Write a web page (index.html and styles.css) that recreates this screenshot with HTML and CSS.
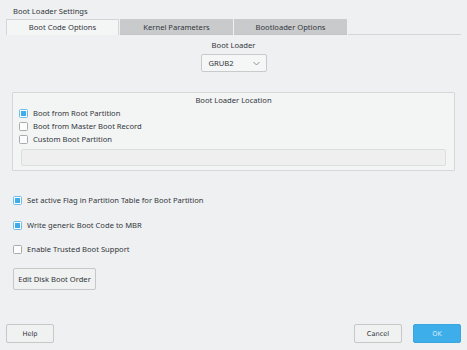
FILE: index.html
```html
<!DOCTYPE html>
<html>
<head>
<meta charset="utf-8">
<link rel="stylesheet" href="styles.css">
</head>
<body>
<div class="dialog">
  <div class="title">Boot Loader Settings</div>
  <div class="tabs">
    <div class="tab active">Boot Code Options</div>
    <div class="tab">Kernel Parameters</div>
    <div class="tab">Bootloader Options</div>
    <div class="tab-fill"></div>
  </div>
  <div class="panel">
    <div class="loader">
      <div class="loader-label">Boot Loader</div>
      <div class="combo"><span>GRUB2</span><svg class="chev" width="7" height="5" viewBox="0 0 7 5"><path d="M0.5 1 L3.5 4 L6.5 1" fill="none" stroke="#7a7c7e" stroke-width="0.8"/></svg></div>
    </div>
    <div class="group">
      <div class="group-title">Boot Loader Location</div>
      <label class="row"><span class="cb checked"></span>Boot from Root Partition</label>
      <label class="row"><span class="cb"></span>Boot from Master Boot Record</label>
      <label class="row"><span class="cb"></span>Custom Boot Partition</label>
      <div class="field"></div>
    </div>
    <div class="options">
      <label class="row"><span class="cb checked"></span>Set active Flag in Partition Table for Boot Partition</label>
      <label class="row"><span class="cb checked"></span>Write generic Boot Code to MBR</label>
      <label class="row"><span class="cb"></span>Enable Trusted Boot Support</label>
    </div>
    <div class="btn edit">Edit Disk Boot Order</div>
  </div>
  <div class="footer">
    <div class="btn fbtn">Help</div>
    <div class="spacer"></div>
    <div class="btn fbtn">Cancel</div>
    <div class="btn fbtn ok">OK</div>
  </div>
</div>
</body>
</html>
```
FILE: styles.css
```css
html, body {
  margin: 0;
  padding: 0;
  background: #eff0f1;
}
.dialog {
  width: 467px;
  height: 350px;
  font-family: "Noto Sans", "Open Sans", sans-serif;
  font-size: 7.6px;
  color: #31363b;
  display: flex;
  flex-direction: column;
  box-sizing: border-box;
}
.title {
  padding: 6px 0 0 13px;
  height: 13px;
  line-height: 11px;
}
.tabs {
  display: flex;
  margin: 0 6px;
  height: 16px;
}
.tab {
  width: 113px;
  height: 16px;
  line-height: 16px;
  text-align: center;
  background: #c9cacc;
  border-bottom: 1px solid #c2c4c6;
  box-sizing: border-box;
  margin-right: 1px;
}
.tab.active {
  background: #f4f5f5;
  border: 1px solid #d4d5d6;
  border-bottom: none;
  line-height: 14px;
}
.tab-fill {
  flex: 1;
  border-bottom: 1px solid #d4d5d6;
}
.panel {
  display: flex;
  flex-direction: column;
  padding: 0 12px 0 12px;
}
.loader {
  display: flex;
  flex-direction: column;
  align-items: center;
  padding-top: 5px;
}
.loader-label {
  line-height: 11px;
  height: 11px;
}
.combo {
  margin-top: 3px;
  width: 66px;
  height: 18px;
  box-sizing: border-box;
  border: 1px solid #c9cacc;
  border-radius: 2px;
  background: #f5f6f6;
  display: flex;
  align-items: center;
  justify-content: space-between;
  padding: 0 6px 0 7px;
}
.group {
  margin-top: 20px;
  height: 79px;
  width: 443px;
  box-sizing: border-box;
  border: 1px solid #d6d7d8;
  border-radius: 1px;
  background: #f3f4f4;
  display: flex;
  flex-direction: column;
  padding: 2px 0 0 6px;
}
.group-title {
  text-align: center;
  line-height: 11px;
  height: 11px;
  padding-right: 6px;
  margin-bottom: 1px;
}
.row {
  display: flex;
  align-items: center;
  height: 13px;
  line-height: 13px;
}
.cb {
  width: 9px;
  height: 9px;
  box-sizing: border-box;
  border: 1px solid #a8abad;
  border-radius: 1.5px;
  background: #fcfcfc;
  margin-right: 5px;
  position: relative;
}
.cb.checked {
  border-color: #6fbce8;
  background: #fcfcfc;
}
.cb.checked::after {
  content: "";
  position: absolute;
  left: 1px;
  top: 1px;
  width: 5px;
  height: 5px;
  background: #3daee9;
}
.field {
  margin: 3px 0 0 2px;
  width: 425px;
  height: 17px;
  box-sizing: border-box;
  border: 1px solid #dcdddd;
  border-radius: 2px;
  background: #efefef;
}
.options {
  display: flex;
  flex-direction: column;
  gap: 11.5px;
  margin-top: 23px;
  margin-left: 1px;
}
.btn {
  box-sizing: border-box;
  border: 1px solid #c5c7c9;
  border-radius: 2px;
  background: #f0f1f1;
  display: flex;
  align-items: center;
  justify-content: center;
}
.edit {
  margin-top: 12px;
  margin-left: 1px;
  width: 83px;
  height: 22px;
}
.footer {
  margin-top: auto;
  display: flex;
  padding: 0 6px 7px 6px;
  font-family: "DejaVu Sans", sans-serif;
  font-size: 6.6px;
}
.spacer { flex: 1; }
.fbtn {
  width: 48px;
  height: 19px;
  margin-left: 11px;
}
.fbtn:first-child { margin-left: 0; }
.ok {
  background: #3daee9;
  border-color: #3aa5de;
  color: #cfe9f8;
}
```
